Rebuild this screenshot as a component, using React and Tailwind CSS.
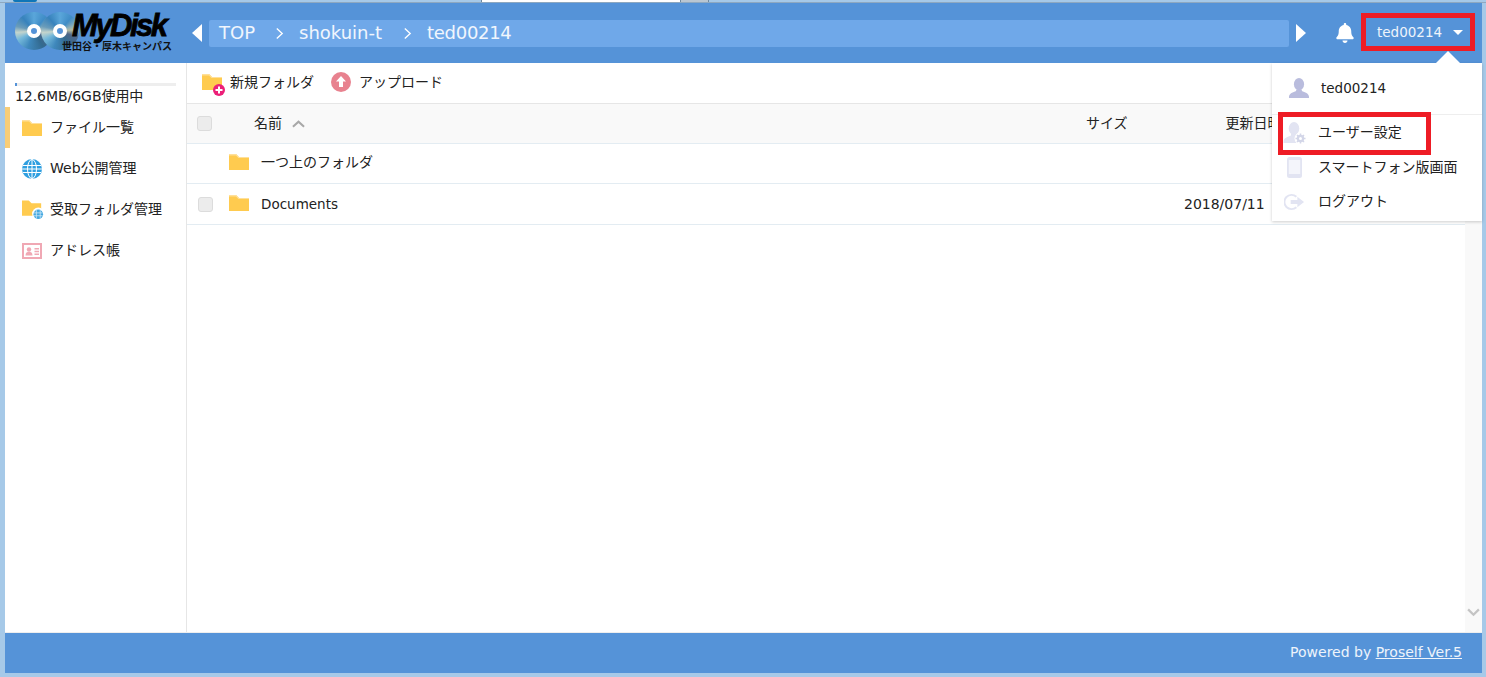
import React from 'react';
import { FaBell } from 'react-icons/fa';

const JP = 'font-["DejaVu_Sans","Noto_Sans_CJK_JP",sans-serif]';

const Folder = ({ className = 'w-5 h-[16px]' }) => (
    <svg viewBox="0 0 20 16" className={className}>
        <path d="M0 0h7l3 3h10v13H0z" fill="#ffcb4f" />
        <path d="M7 0l3 3h10v1H9.500L7 1.500H0V0z" fill="#ffe09a" />
    </svg>
);

const Globe = () => (
    <svg viewBox="0 0 20 20" className="w-5 h-5">
        <circle cx="10" cy="10" r="10" fill="#2f9fe0" />
        <g fill="none" stroke="#fff" strokeWidth="1">
            <ellipse cx="10" cy="10" rx="4.500" ry="9.500" />
            <path d="M10 0v20M1 6.500h18M0 10h20M1 13.500h18" />
        </g>
    </svg>
);

const PublishFolder = () => (
    <svg viewBox="0 0 24 20" className="w-[23px] h-5 overflow-visible">
        <path d="M0 0h7l3 3h10v13H0z" fill="#ffcb4f" />
        <circle cx="17" cy="14" r="6.500" fill="#fff" />
        <circle cx="17" cy="14.500" r="5" fill="#45a8e0" />
        <path d="M12.500 13h9M12.500 16h9M15 10v9M19 10v9" stroke="#cfe9f8" strokeWidth="0.800" />
    </svg>
);

const AddressCard = () => (
    <svg viewBox="0 0 20 16" className="w-5 h-4">
        <rect x="1" y="1" width="18" height="14" fill="#fff" stroke="#f0a8b4" strokeWidth="2" />
        <circle cx="7" cy="6.500" r="2.200" fill="#f0a8b4" />
        <path d="M3.500 12.500c0-2.800 1.500-3.700 3.500-3.700s3.500.9 3.500 3.700zM12.500 5h4.500v1.500h-4.500zM12.500 7.800h4.500v1.500h-4.500zM12.500 10.600h4.500v1.500h-4.500z" fill="#f0a8b4" />
    </svg>
);

const Bust = ({ fill }) => (
    <>
        <ellipse cx="11" cy="6.500" rx="5.300" ry="6.500" fill={fill} />
        <path d="M8 12h6v1.500c3 1.500 7.500 2 7.500 6.500v1H.5v-1c0-4.500 4.500-5 7.500-6.500z" fill={fill} />
    </>
);

const UserIcon = () => (
    <svg viewBox="0 0 22 22" className="w-[22px] h-[21px]">
        <Bust fill="#b9bcdd" />
    </svg>
);

const UserGearIcon = () => (
    <svg viewBox="0 0 23 22" className="w-[23px] h-[22px]">
        <Bust fill="#e2e4f2" />
        <circle cx="17.500" cy="16.500" r="6" fill="#fff" />
        <circle cx="17.500" cy="16.500" r="2.600" fill="none" stroke="#d3d6e8" strokeWidth="2.200" />
        <path d="M17.500 11.500v2M17.500 19.500v2M12.500 16.500h2M20.500 16.500h2M14 13l1.400 1.400M19.600 18.600L21 20M21 13l-1.400 1.400M15.400 18.600L14 20" stroke="#d3d6e8" strokeWidth="1.500" />
    </svg>
);

const PhoneIcon = () => (
    <svg viewBox="0 0 15 21" className="w-[15px] h-[21px]">
        <rect width="15" height="21" rx="2.500" fill="#e2e4f2" />
        <rect x="1.800" y="3" width="11.400" height="14" fill="#f4f5fb" />
    </svg>
);

const LogoutIcon = () => (
    <svg viewBox="0 0 22 18" className="w-[21px] h-[18px]">
        <path d="M13 3.500A7.500 7.500 0 1 0 13 14.500" fill="none" stroke="#e2e4f2" strokeWidth="2" />
        <path d="M7 7h7V3.500L21 9l-7 5.500V11H7z" fill="#e2e4f2" />
    </svg>
);

const Disc = () => (
    <div className="w-[38px] h-[38px] shrink-0 rounded-full flex items-center justify-center bg-[conic-gradient(#5aa6da_0deg,#3f8cc6_40deg,#8fb0b8_70deg,#b4bca4_85deg,#4f6688_110deg,#336a90_150deg,#3f88bc_200deg,#74b8da_240deg,#c4d4cc_265deg,#6a9cba_285deg,#3782bc_320deg,#5aa6da_360deg)]">
        <div className="w-[14px] h-[14px] rounded-full border-[4px] border-white bg-[#5593d8]" />
    </div>
);

const Logo = () => (
    <div className="relative w-[170px] h-[44px] shrink-0">
        <div className="flex mt-[1px]">
            <Disc />
            <div className="-ml-[12px]"><Disc /></div>
        </div>
        <span className='absolute left-[57px] top-[-5px] text-[31px] leading-[40px] font-bold italic tracking-[-2.500px] text-black [-webkit-text-stroke:0.800px_black] font-["Liberation_Sans",sans-serif]'>MyDisk</span>
        <span className={`absolute left-[47px] top-[29px] text-[10px] leading-[14px] font-bold text-[#111] whitespace-nowrap ${JP}`}>世田谷・厚木キャンパス</span>
    </div>
);

const NavItem = ({ icon, label, active }) => (
    <div className={`h-[41px] flex items-center border-l-[5px] ${active ? 'border-[#f8cd76]' : 'border-transparent'}`}>
        <div className="w-[28px] ml-[12px] shrink-0 flex items-center">{icon}</div>
        <span className="text-[14px] text-[#222] whitespace-nowrap">{label}</span>
    </div>
);

const Crumb = ({ children }) => (
    <span className="whitespace-nowrap">{children}</span>
);

const Arrow = ({ dir }) => (
    <div className={`w-0 h-0 border-y-[9px] border-y-transparent ${dir === 'left' ? 'border-r-[10px] border-r-white' : 'border-l-[10px] border-l-white'}`} />
);

const CrumbSep = () => (
    <svg viewBox="0 0 10 14" className="w-[9px] h-[13px]">
        <path d="M2 1.500L8 7l-6 5.500" fill="none" stroke="#fff" strokeWidth="1.500" />
    </svg>
);

const Check = () => (
    <div className="w-[15px] h-[15px] rounded-[3px] bg-[#ececec] border border-[#dcdcdc]" />
);

const MenuRow = ({ icon, label, iconClass = 'pl-[11px]' }) => (
    <div className="h-[35px] flex items-center">
        <div className={`w-[46px] shrink-0 flex items-center ${iconClass}`}>{icon}</div>
        <span className="text-[14px] text-[#222] whitespace-nowrap">{label}</span>
    </div>
);

export default function App() {
    return (
        <div className={`relative w-[1486px] h-[677px] overflow-hidden flex flex-col bg-[#a6c9e8] pl-[5px] pr-[4px] pb-[4px] ${JP}`}>
            {/* browser chrome sliver */}
            <div className="h-[3px] -ml-[5px] -mr-[4px] flex shrink-0 border-b border-[#8ea8c0]">
                <div className="ml-[13px] w-[24px] bg-[#0f76b8] rounded-b-[6px]" />
                <div className="ml-[444px] w-[199px] bg-white border-l border-[#6f8aa0]" />
                <div className="w-[29px] bg-[#b9c6d2] border-x border-[#6f8aa0]" />
            </div>

            {/* header */}
            <header className="h-[60px] shrink-0 bg-[#5593d8] flex items-center pl-[10px]">
                <Logo />
                <div className="ml-[7px]"><Arrow dir="left" /></div>
                <div className="ml-[7px] w-[1080px] h-[27px] bg-[#6fa8e9] rounded-[2px] flex items-center pl-[10px] pb-[2px] text-[18px] text-white/90">
                    <Crumb>TOP</Crumb>
                    <div className="ml-[20px] mt-[2px]"><CrumbSep /></div>
                    <div className="ml-[15px]"><Crumb>shokuin-t</Crumb></div>
                    <div className="ml-[21px] mt-[2px]"><CrumbSep /></div>
                    <div className="ml-[15px] tracking-[-0.300px]"><Crumb>ted00214</Crumb></div>
                </div>
                <div className="ml-[7px]"><Arrow dir="right" /></div>
                <FaBell className="ml-[29px] text-white w-[20px] h-[20px]" />
                <div className="ml-[6px] mb-[2px] w-[114px] h-[38px] border-[5px] border-[#ee1c25] flex items-center pl-[11px] text-[13.500px] text-white/90">
                    <span>ted00214</span>
                    <div className="ml-[11px] w-0 h-0 border-x-[5px] border-x-transparent border-t-[5px] border-t-white" />
                </div>
            </header>

            {/* body */}
            <div className="flex-1 flex min-h-0 bg-white border-b border-[#eeeeee]">
                <aside className="w-[182px] shrink-0 border-r border-[#e6e6e6] flex flex-col">
                    <div className="h-[44px] flex flex-col pl-[10px] pr-[10px] pt-[20px]">
                        <div className="h-[3px] bg-[#eeeeee]">
                            <div className="h-full w-[2px] bg-[#5593d8]" />
                        </div>
                        <span className="text-[14px] leading-[20px] tracking-[-0.050px] text-[#222] whitespace-nowrap">12.6MB/6GB使用中</span>
                    </div>
                    <NavItem active icon={<Folder />} label="ファイル一覧" />
                    <NavItem icon={<Globe />} label="Web公開管理" />
                    <NavItem icon={<PublishFolder />} label="受取フォルダ管理" />
                    <NavItem icon={<AddressCard />} label="アドレス帳" />
                </aside>

                <main className="flex-1 min-w-0 flex flex-col">
                    <div className="h-[41px] shrink-0 flex items-center pl-[15px] pb-[2px] border-b border-[#e6e6e6]">
                        <div className="relative w-[20px] h-[16px]">
                            <Folder />
                            <svg viewBox="0 0 12 12" className="absolute -right-[3px] -bottom-[6px] w-[12px] h-[12px]">
                                <circle cx="6" cy="6" r="6" fill="#ec1f78" />
                                <path d="M6 2.500v7M2.500 6h7" stroke="#fff" strokeWidth="2" />
                            </svg>
                        </div>
                        <span className="ml-[8px] text-[14px] text-[#222]">新規フォルダ</span>
                        <svg viewBox="0 0 20 20" className="ml-[17px] w-5 h-5">
                            <circle cx="10" cy="10" r="10" fill="#e8828f" />
                            <path d="M10 4l5 5.500h-3V15H8V9.500H5z" fill="#fff" />
                        </svg>
                        <span className="ml-[8px] text-[14px] text-[#222]">アップロード</span>
                    </div>

                    <div className="flex-1 min-h-0 flex">
                        <div className="flex-1 min-w-0 flex flex-col">
                            <div className="h-[40px] shrink-0 flex items-center bg-[#f9f9f9] border-b border-[#e3ecf2] text-[14px] text-[#222] pl-[10px]">
                                <Check />
                                <span className="ml-[42px]">名前</span>
                                <svg viewBox="0 0 14 8" className="ml-[10px] w-[13px] h-[8px]">
                                    <path d="M1 7l6-5.500L13 7" fill="none" stroke="#a8a8a8" strokeWidth="2.200" />
                                </svg>
                                <span className="ml-[781px]">サイズ</span>
                                <span className="ml-[98px] whitespace-nowrap">更新日時</span>
                            </div>
                            <div className="h-[40px] shrink-0 flex items-center border-b border-[#e3ecf2] text-[14px] text-[#222] pl-[42px]">
                                <div className="mb-[3px]"><Folder /></div>
                                <span className="ml-[12px] mb-[2px]">一つ上のフォルダ</span>
                            </div>
                            <div className="h-[41px] shrink-0 flex items-center border-b border-[#e3ecf2] text-[14px] text-[#222] pl-[11px]">
                                <Check />
                                <div className="ml-[16px] mb-[2px]"><Folder /></div>
                                <span className="ml-[12px] text-[13.500px]">Documents</span>
                                <span className="ml-[846px]">2018/07/11</span>
                            </div>
                        </div>
                        <div className="w-[17px] shrink-0 flex flex-col justify-end items-center bg-[#f9f9f9] pb-[15px]">
                            <svg viewBox="0 0 14 10" className="w-[13px] h-[9px]">
                                <path d="M1 1.500l6 6 6-6" fill="none" stroke="#c4c4c4" strokeWidth="2.500" />
                            </svg>
                        </div>
                    </div>
                </main>
            </div>

            {/* footer */}
            <footer className="h-[40px] shrink-0 bg-[#5593d8] flex items-center justify-end pr-[20px] pb-[2px] text-[14px] text-white/90">
                <span>Powered by <span className="underline">Proself Ver.5</span></span>
            </footer>

            {/* user menu */}
            <div className="absolute left-[1272px] top-[63px] w-[210px] h-[158px] bg-white shadow-[0_1px_3px_rgba(0,0,0,0.2)] flex flex-col">
                <div className="absolute left-[164px] -top-[12px] w-0 h-0 border-x-[12px] border-x-transparent border-b-[12px] border-b-white" />
                <div className="h-[52px] shrink-0 flex items-center border-b border-[#eeeeee] pl-[16px]">
                    <UserIcon />
                    <span className="ml-[11px] text-[13.500px] text-[#222]">ted00214</span>
                </div>
                <MenuRow icon={<UserGearIcon />} label="ユーザー設定" />
                <MenuRow icon={<PhoneIcon />} label="スマートフォン版画面" iconClass="pl-[15px]" />
                <div className="-mt-px"><MenuRow icon={<LogoutIcon />} label="ログアウト" iconClass="pl-[12px]" /></div>
            </div>
            <div className="absolute left-[1278px] top-[112px] w-[153px] h-[43px] border-[5px] border-[#ee1c25]" />
        </div>
    );
}
